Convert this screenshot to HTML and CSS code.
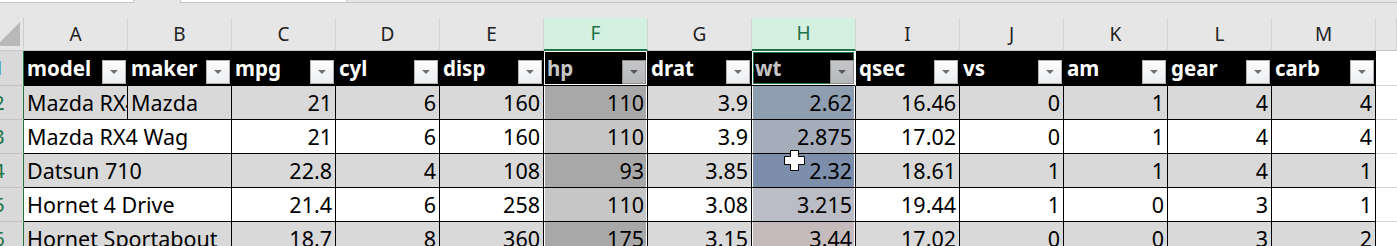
FILE: index.html
```html
<!DOCTYPE html>
<html lang="ko">
<head>
<meta charset="utf-8">
<title>mtcars</title>
<link rel="stylesheet" href="styles.css">
</head>
<body>
<div class="topbar">
  <div class="namebox"></div>
  <div class="gap"></div>
  <div class="fbox"></div>
  <div class="rest"></div>
</div>
<div class="sheet">
  <div class="corner"><svg class="tri" width="23" height="32" viewBox="0 0 23 32"><polygon points="20,4 20,28 -4,28" fill="#b9b9b9"/></svg></div>
  <div class="colh">A</div><div class="colh">B</div><div class="colh">C</div><div class="colh">D</div><div class="colh">E</div>
  <div class="colh sel">F</div><div class="colh">G</div><div class="colh sel">H</div><div class="colh">I</div><div class="colh">J</div>
  <div class="colh">K</div><div class="colh">L</div><div class="colh">M</div><div class="colh"></div>

  <div class="rowh"><span>1</span></div>
  <div class="th"><span class="t">model</span><span class="btn"></span></div>
  <div class="th"><span class="t">maker</span><span class="btn"></span></div>
  <div class="th"><span class="t">mpg</span><span class="btn"></span></div>
  <div class="th"><span class="t">cyl</span><span class="btn"></span></div>
  <div class="th"><span class="t">disp</span><span class="btn"></span></div>
  <div class="th sf"><span class="t">hp</span><span class="btn"></span></div>
  <div class="th"><span class="t">drat</span><span class="btn"></span></div>
  <div class="th active"><span class="t">wt</span><span class="btn"></span></div>
  <div class="th"><span class="t">qsec</span><span class="btn"></span></div>
  <div class="th"><span class="t">vs</span><span class="btn"></span></div>
  <div class="th"><span class="t">am</span><span class="btn"></span></div>
  <div class="th"><span class="t">gear</span><span class="btn"></span></div>
  <div class="th"><span class="t">carb</span><span class="btn"></span></div>
  <div class="blank"></div>

  <div class="rowh"><span>2</span></div>
  <div class="d g">Mazda RX4</div><div class="d g">Mazda</div>
  <div class="d g r">21</div><div class="d g r">6</div><div class="d g r">160</div><div class="d g r sf">110</div>
  <div class="d g r">3.9</div><div class="d r sh wt1">2.62</div><div class="d g r">16.46</div><div class="d g r">0</div>
  <div class="d g r">1</div><div class="d g r">4</div><div class="d g r">4</div><div class="blank"></div>

  <div class="rowh"><span>3</span></div>
  <div class="d w span2">Mazda RX4 Wag</div>
  <div class="d w r">21</div><div class="d w r">6</div><div class="d w r">160</div><div class="d w r sf">110</div>
  <div class="d w r">3.9</div><div class="d r sh wt2">2.875</div><div class="d w r">17.02</div><div class="d w r">0</div>
  <div class="d w r">1</div><div class="d w r">4</div><div class="d w r">4</div><div class="blank"></div>

  <div class="rowh"><span>4</span></div>
  <div class="d g span2">Datsun 710</div>
  <div class="d g r">22.8</div><div class="d g r">4</div><div class="d g r">108</div><div class="d g r sf">93</div>
  <div class="d g r">3.85</div><div class="d r sh wt3">2.32</div><div class="d g r">18.61</div><div class="d g r">1</div>
  <div class="d g r">1</div><div class="d g r">4</div><div class="d g r">1</div><div class="blank"></div>

  <div class="rowh"><span>5</span></div>
  <div class="d w span2">Hornet 4 Drive</div>
  <div class="d w r">21.4</div><div class="d w r">6</div><div class="d w r">258</div><div class="d w r sf">110</div>
  <div class="d w r">3.08</div><div class="d r sh wt4">3.215</div><div class="d w r">19.44</div><div class="d w r">1</div>
  <div class="d w r">0</div><div class="d w r">3</div><div class="d w r">1</div><div class="blank"></div>

  <div class="rowh"><span>6</span></div>
  <div class="d g span2">Hornet Sportabout</div>
  <div class="d g r">18.7</div><div class="d g r">8</div><div class="d g r">360</div><div class="d g r sf">175</div>
  <div class="d g r">3.15</div><div class="d r sh wt5">3.44</div><div class="d g r">17.02</div><div class="d g r">0</div>
  <div class="d g r">0</div><div class="d g r">3</div><div class="d g r">2</div><div class="blank"></div>
</div>
<svg class="cursor" width="21" height="21" viewBox="0 0 21 21"><polygon points="6.5,0.5 14.5,0.5 14.5,6.5 20.5,6.5 20.5,14.5 14.5,14.5 14.5,20.5 6.5,20.5 6.5,14.5 0.5,14.5 0.5,6.5 6.5,6.5" fill="#fff" stroke="#000" stroke-width="1"/></svg>
</body>
</html>
```

FILE: styles.css
```css
* { box-sizing: border-box; margin: 0; padding: 0; }
html, body { width: 1397px; height: 246px; overflow: hidden; background: #e6e6e6; }
body { font-family: "Noto Sans", "Open Sans", sans-serif; position: relative; }

.topbar { height: 18px; display: flex; align-items: flex-start; }
.namebox { width: 134px; height: 3px; background: #fff; border-right: 1px solid #c6c6c6; border-bottom: 1px solid #c6c6c6; }
.gap { width: 46px; height: 3px; }
.fbox { width: 167px; height: 3px; background: #fff; border: 1px solid #c6c6c6; border-top: 0; }
.rest { flex: 1; height: 3px; border-bottom: 1px solid #c6c6c6; }

.sheet {
  display: grid;
  grid-template-columns: 24px repeat(13, 104px) 1fr;
  grid-template-rows: 33px 35px repeat(5, 34px);
}

.corner { background: #e6e6e6; border-right: 1px solid #cdcdcd; border-bottom: 1px solid #c6c6c6; overflow: hidden; }
.tri { display: block; }

.colh {
  background: #e6e6e6; border-right: 1px solid #d2d2d2; border-bottom: 1px solid #c6c6c6;
  text-align: center; font-size: 19px; line-height: 32px; color: #222;
}
.colh.sel { background: #d3f0e0; color: #217346; border-bottom: 2px solid #217346; line-height: 31px; }

.rowh {
  background: #d9d9d9; border-right: 1px solid #217346; border-bottom: 1px solid #c3c3c3;
  overflow: hidden; color: #217346; font-size: 20px; line-height: 33px;
}
.rowh span { display: block; width: 40px; margin-left: -21px; text-align: center; }

.th {
  background: #000; color: #fff; font-weight: 700; font-size: 20.5px;
  border-right: 1px solid #000; border-bottom: 1px solid #000;
  display: flex; justify-content: space-between; align-items: flex-end;
  padding-left: 3px; overflow: hidden;
}
.th .t { line-height: 34px; white-space: nowrap; }
.btn {
  width: 24px; height: 24px; flex: none; margin: 0 1px 1px 0;
  border: 1px solid #b3b3b3; background: linear-gradient(#fdfdfd, #eceef2);
  display: flex; align-items: center; justify-content: center;
}
.btn::after {
  content: ""; width: 0; height: 0;
  border-left: 4px solid transparent; border-right: 4px solid transparent; border-top: 4px solid #707070;
}
.th.sf { color: #c6c6c6; box-shadow: inset 0 0 0 1px #fff; }
.th.active { color: #c6c6c6; border-right-color: #fff; box-shadow: inset 0 0 0 1px #fff, inset 0 0 0 2px #217346; }
.th.sf .btn, .th.active .btn { background: linear-gradient(#c4c5c8, #b6b7ba); border-color: #8f8f8f; }
.th.sf .btn::after, .th.active .btn::after { border-top-color: #575757; }

.blank { background: #fff; border-bottom: 1px solid #d4d4d4; }

.d {
  border-right: 1px solid #000; border-bottom: 1px solid #000;
  font-size: 21.5px; line-height: 33px; padding: 0 3px;
  white-space: nowrap; overflow: hidden; color: #000;
}
.g { background: #d9d9d9; }
.w { background: #fff; }
.r { text-align: right; }
.span2 { grid-column: span 2; }

.sf, .sh { box-shadow: inset 1px 0 #fff, inset -1px 0 #fff; }
.sf.g { background: #a8a8a8; }
.sf.w { background: #c6c6c6; }
.wt1 { background: #8f9db1; }
.wt2 { background: #a5adba; }
.wt3 { background: #7c8eaa; }
.wt4 { background: #babdc5; }
.wt5 { background: #c6bbbc; }

.cursor { position: absolute; left: 784px; top: 150px; }
```
